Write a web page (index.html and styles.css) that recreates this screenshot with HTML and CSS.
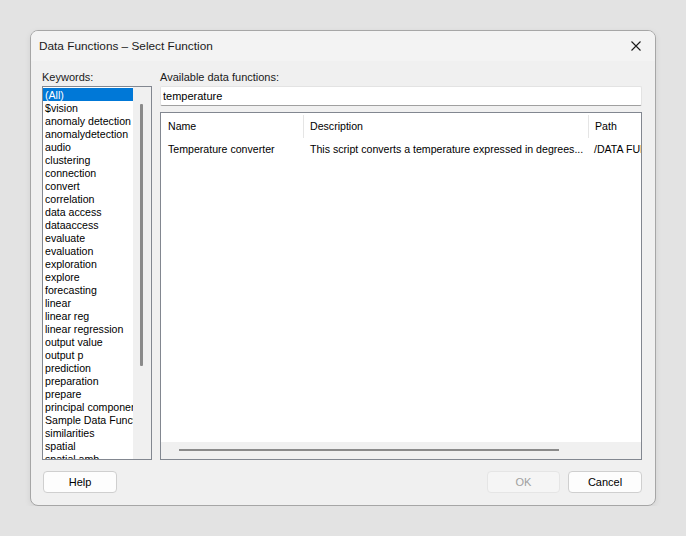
FILE: index.html
```html
<!DOCTYPE html>
<html lang="en">
<head>
    <meta charset="UTF-8">
    <title>Data Functions – Select Function</title>
    <link rel="stylesheet" href="styles.css">
</head>
<body>
    <div class="dialog">
        <div class="titlebar">
            <span class="title">Data Functions – Select Function</span>
            <span class="close">
                <svg width="10" height="10" viewBox="0 0 10 10"><path d="M0.5 0.5L9.5 9.5M9.5 0.5L0.5 9.5" stroke="#1a1a1a" stroke-width="1.1" fill="none"/></svg>
            </span>
        </div>
        <div class="content">
            <div class="keywords">
                <div class="caption">Keywords:</div>
                <div class="listbox">
                    <ul class="items">
                        <li class="selected">(All)</li>
                        <li>$vision</li>
                        <li>anomaly detection</li>
                        <li>anomalydetection</li>
                        <li>audio</li>
                        <li>clustering</li>
                        <li>connection</li>
                        <li>convert</li>
                        <li>correlation</li>
                        <li>data access</li>
                        <li>dataaccess</li>
                        <li>evaluate</li>
                        <li>evaluation</li>
                        <li>exploration</li>
                        <li>explore</li>
                        <li>forecasting</li>
                        <li>linear</li>
                        <li>linear reg</li>
                        <li>linear regression</li>
                        <li>output value</li>
                        <li>output p</li>
                        <li>prediction</li>
                        <li>preparation</li>
                        <li>prepare</li>
                        <li>principal components</li>
                        <li>Sample Data Functions</li>
                        <li>similarities</li>
                        <li>spatial</li>
                        <li>spatial amb</li>
                    </ul>
                    <div class="vscroll"><div class="thumb"></div></div>
                </div>
            </div>
            <div class="functions">
                <div class="caption">Available data functions:</div>
                <input class="search" type="text" value="temperature">
                <div class="listview">
                    <div class="lv-body">
                        <div class="lv-header">
                            <div class="col col-name">Name</div>
                            <div class="col col-desc">Description</div>
                            <div class="col col-path">Path</div>
                        </div>
                        <div class="lv-row">
                            <div class="col col-name">Temperature converter</div>
                            <div class="col col-desc">This script converts a temperature expressed in degrees...</div>
                            <div class="col col-path">/DATA FUNCTIONS/Temperature converter</div>
                        </div>
                    </div>
                    <div class="hscroll"><div class="thumb"></div></div>
                </div>
            </div>
        </div>
        <div class="footer">
            <button class="btn">Help</button>
            <span class="spacer"></span>
            <button class="btn" disabled>OK</button>
            <button class="btn">Cancel</button>
        </div>
    </div>
</body>
</html>
```

FILE: styles.css
```css
body { margin: 0; background: #e3e3e3; font-family: "Liberation Sans", Arial, sans-serif; color: #000; }

.dialog { margin: 30px 0 0 30px; width: 626px; height: 476px; box-sizing: border-box; border: 1px solid #a6a6a6; border-radius: 8px; background: #f0f0f0; display: flex; flex-direction: column; overflow: hidden; box-shadow: 0 2px 6px rgba(0,0,0,0.08); }

.titlebar { height: 30px; background: #f3f3f3; display: flex; align-items: center; padding: 0 9px 0 8px; flex-shrink: 0; }
.title { flex: 1; font-size: 11.8px; color: #1a1a1a; }
.close { width: 10px; height: 10px; display: flex; margin-right: 5px; }

.content { display: flex; gap: 8px; padding: 9px 13px 0 11px; }
.caption { font-size: 11px; line-height: 14px; height: 14px; margin-bottom: 2px; color: #1a1a1a; white-space: nowrap; }

.keywords { width: 110px; }
.listbox { height: 374px; box-sizing: border-box; border: 1px solid #828790; background: #fff; display: flex; overflow: hidden; }
.items { list-style: none; margin: 0; padding: 1px 0 0 0; width: 90px; overflow: hidden; font-size: 10.6px; }
.items li { height: 13px; line-height: 14px; padding-left: 2px; white-space: nowrap; overflow: hidden; }
.items li.selected { background: #0078d7; color: #fff; }
.vscroll { width: 18px; background: #f0f0f0; }
.vscroll .thumb { width: 3px; height: 262px; margin: 17px 0 0 7px; background: #8a8a8a; border-radius: 1px; }

.functions { width: 482px; }
.search { display: block; width: 100%; height: 20px; box-sizing: border-box; margin: 0 0 6px 0; padding: 0 2px; border: 1px solid #e3e3e3; border-bottom-color: #a0a0a0; border-radius: 2px; font-family: "Liberation Sans", Arial, sans-serif; font-size: 11px; color: #000; background: #fff; outline: none; }

.listview { height: 348px; box-sizing: border-box; border: 1px solid #828790; background: #fff; display: flex; flex-direction: column; overflow: hidden; }
.lv-body { flex: 1; overflow: hidden; font-size: 10.6px; }
.lv-header, .lv-row { display: flex; white-space: nowrap; }
.lv-header { height: 25px; align-items: center; padding-top: 1px; box-sizing: border-box; }
.lv-row { height: 21px; align-items: center; }
.col { overflow: hidden; flex-shrink: 0; box-sizing: border-box; }
.col-name { width: 143px; padding-left: 7px; }
.col-desc { width: 285px; padding-left: 6px; }
.col-path { width: 200px; padding-left: 6px; }
.lv-header .col { height: 23px; line-height: 23px; }
.lv-header .col-name, .lv-header .col-desc { border-right: 1px solid #e5e5e5; }
.lv-row .col-name { width: 142px; padding-left: 7px; }
.lv-row .col-desc { width: 285px; padding-left: 7px; }
.hscroll { height: 17px; background: #f0f0f0; flex-shrink: 0; margin-top: auto; }
.hscroll .thumb { width: 380px; height: 2px; margin: 7px 0 0 18px; background: #8a8a8a; }

.footer { display: flex; gap: 8px; padding: 11px 13px 0 12px; }
.spacer { flex: 1; }
.btn { width: 74px; height: 22px; padding: 0; border: 1px solid #cfcfcf; border-radius: 4px; background: #fdfdfd; font-family: "Liberation Sans", Arial, sans-serif; font-size: 11px; color: #000; }
.btn:disabled { background: #f5f5f5; border-color: #e5e5e5; color: #a0a0a0; width: 73px; }
```
